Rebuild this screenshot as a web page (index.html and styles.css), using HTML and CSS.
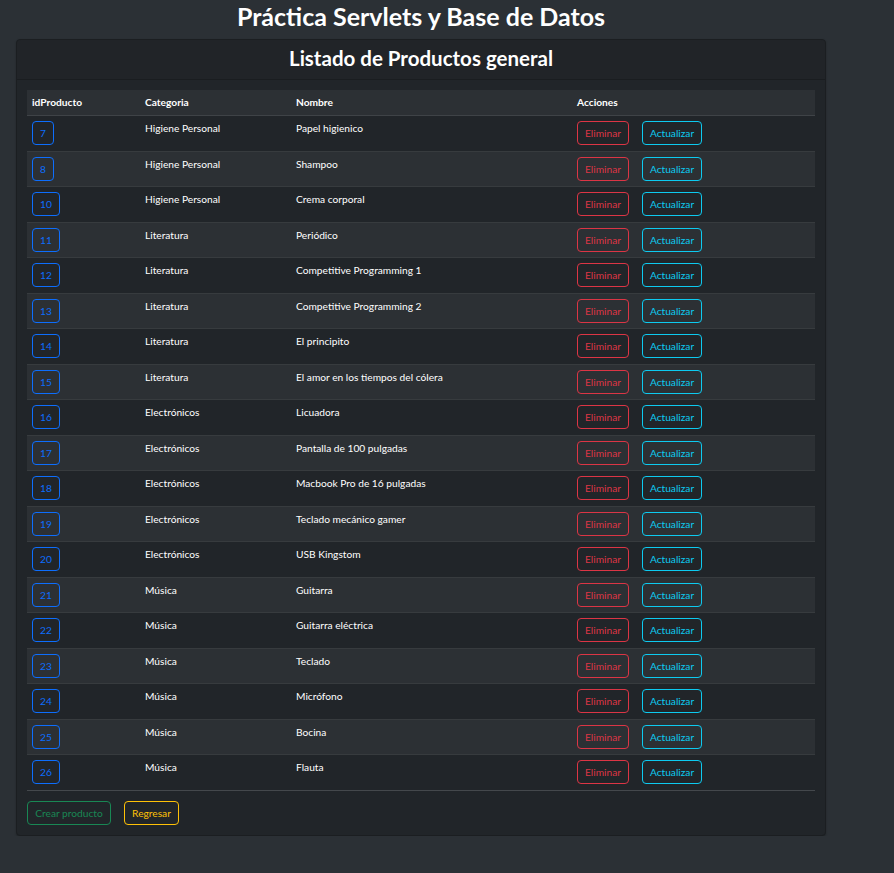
FILE: index.html
```html
<!DOCTYPE html>
<html lang="es">
<head>
<meta charset="utf-8">
<title>Práctica Servlets y Base de Datos</title>
<link rel="stylesheet" href="styles.css">
</head>
<body>
<div class="page">
  <h1 class="title">Práctica Servlets y Base de Datos</h1>
  <div class="card">
    <div class="card-header">Listado de Productos general</div>
    <div class="card-body">
      <table class="table">
        <thead>
          <tr><th class="c-id">idProducto</th><th class="c-cat">Categoria</th><th class="c-name">Nombre</th><th class="c-act">Acciones</th></tr>
        </thead>
        <tbody>
          <tr><td><a class="btn btn-id">7</a></td><td>Higiene Personal</td><td>Papel higienico</td><td><a class="btn btn-del">Eliminar</a><a class="btn btn-upd">Actualizar</a></td></tr>
          <tr><td><a class="btn btn-id">8</a></td><td>Higiene Personal</td><td>Shampoo</td><td><a class="btn btn-del">Eliminar</a><a class="btn btn-upd">Actualizar</a></td></tr>
          <tr><td><a class="btn btn-id">10</a></td><td>Higiene Personal</td><td>Crema corporal</td><td><a class="btn btn-del">Eliminar</a><a class="btn btn-upd">Actualizar</a></td></tr>
          <tr><td><a class="btn btn-id">11</a></td><td>Literatura</td><td>Periódico</td><td><a class="btn btn-del">Eliminar</a><a class="btn btn-upd">Actualizar</a></td></tr>
          <tr><td><a class="btn btn-id">12</a></td><td>Literatura</td><td>Competitive Programming 1</td><td><a class="btn btn-del">Eliminar</a><a class="btn btn-upd">Actualizar</a></td></tr>
          <tr><td><a class="btn btn-id">13</a></td><td>Literatura</td><td>Competitive Programming 2</td><td><a class="btn btn-del">Eliminar</a><a class="btn btn-upd">Actualizar</a></td></tr>
          <tr><td><a class="btn btn-id">14</a></td><td>Literatura</td><td>El principito</td><td><a class="btn btn-del">Eliminar</a><a class="btn btn-upd">Actualizar</a></td></tr>
          <tr><td><a class="btn btn-id">15</a></td><td>Literatura</td><td>El amor en los tiempos del cólera</td><td><a class="btn btn-del">Eliminar</a><a class="btn btn-upd">Actualizar</a></td></tr>
          <tr><td><a class="btn btn-id">16</a></td><td>Electrónicos</td><td>Licuadora</td><td><a class="btn btn-del">Eliminar</a><a class="btn btn-upd">Actualizar</a></td></tr>
          <tr><td><a class="btn btn-id">17</a></td><td>Electrónicos</td><td>Pantalla de 100 pulgadas</td><td><a class="btn btn-del">Eliminar</a><a class="btn btn-upd">Actualizar</a></td></tr>
          <tr><td><a class="btn btn-id">18</a></td><td>Electrónicos</td><td>Macbook Pro de 16 pulgadas</td><td><a class="btn btn-del">Eliminar</a><a class="btn btn-upd">Actualizar</a></td></tr>
          <tr><td><a class="btn btn-id">19</a></td><td>Electrónicos</td><td>Teclado mecánico gamer</td><td><a class="btn btn-del">Eliminar</a><a class="btn btn-upd">Actualizar</a></td></tr>
          <tr><td><a class="btn btn-id">20</a></td><td>Electrónicos</td><td>USB Kingstom</td><td><a class="btn btn-del">Eliminar</a><a class="btn btn-upd">Actualizar</a></td></tr>
          <tr><td><a class="btn btn-id">21</a></td><td>Música</td><td>Guitarra</td><td><a class="btn btn-del">Eliminar</a><a class="btn btn-upd">Actualizar</a></td></tr>
          <tr><td><a class="btn btn-id">22</a></td><td>Música</td><td>Guitarra eléctrica</td><td><a class="btn btn-del">Eliminar</a><a class="btn btn-upd">Actualizar</a></td></tr>
          <tr><td><a class="btn btn-id">23</a></td><td>Música</td><td>Teclado</td><td><a class="btn btn-del">Eliminar</a><a class="btn btn-upd">Actualizar</a></td></tr>
          <tr><td><a class="btn btn-id">24</a></td><td>Música</td><td>Micrófono</td><td><a class="btn btn-del">Eliminar</a><a class="btn btn-upd">Actualizar</a></td></tr>
          <tr><td><a class="btn btn-id">25</a></td><td>Música</td><td>Bocina</td><td><a class="btn btn-del">Eliminar</a><a class="btn btn-upd">Actualizar</a></td></tr>
          <tr><td><a class="btn btn-id">26</a></td><td>Música</td><td>Flauta</td><td><a class="btn btn-del">Eliminar</a><a class="btn btn-upd">Actualizar</a></td></tr>
        </tbody>
      </table>
      <div class="actions">
        <a class="btn btn-create">Crear producto</a>
        <a class="btn btn-back">Regresar</a>
      </div>
    </div>
  </div>
</div>
</body>
</html>
```

FILE: styles.css
```css
* { box-sizing: border-box; }
html, body {
  margin: 0;
  padding: 0;
  background: #2b3035;
  color: #dee2e6;
  font-family: Lato, "Noto Sans", sans-serif;
}
.page {
  width: 842px;
  padding: 0 16px;
}
.title {
  margin: 0 0 7px;
  height: 32px;
  line-height: 32px;
  text-align: center;
  font-size: 25px;
  font-weight: 700;
  color: #fff;
}
.card {
  background: #212529;
  border: 1px solid #1b1e21;
  border-radius: 4px;
  box-shadow: 0 1px 2px rgba(0,0,0,0.25);
}
.card-header {
  height: 40px;
  line-height: 36px;
  text-align: center;
  font-size: 20.5px;
  font-weight: 700;
  color: #fff;
  border-bottom: 1px solid #1a1d20;
  background: #212428;
  border-radius: 4px 4px 0 0;
}
.card-body {
  padding: 10px 10px 10px;
}
.table {
  width: 100%;
  border-collapse: collapse;
  table-layout: fixed;
  font-size: 10.2px;
  line-height: 15px;
  vertical-align: top;
}
.table th, .table td {
  padding: 5.25px 5px;
  text-align: left;
  vertical-align: top;
}
.table th {
  padding: 5px;
  line-height: 15px;
  font-weight: 700;
  color: #fff;
  background: #2c3034;
  border-bottom: 1px solid #3f4347;
}
.table td {
  color: #fff;
  border-bottom: 1px solid #373b3e;
}
.table tbody tr:nth-child(even) td { background: #2c3034; }
.table tbody tr:last-child td { border-bottom-color: #44484c; }
.c-id { width: 113px; }
.c-cat { width: 151px; }
.c-name { width: 281px; }
.btn {
  display: inline-block;
  height: 24px;
  line-height: 22px;
  padding: 0 7px;
  border: 1px solid;
  border-radius: 4px;
  font-size: 10.2px;
  text-align: center;
  vertical-align: top;
}
.btn-id { color: #0d6efd; border-color: #0d6efd; min-width: 22px; }
.btn-del { color: #dc3545; border-color: #dc3545; width: 52px; padding: 0; }
.btn-upd { color: #0dcaf0; border-color: #0dcaf0; width: 60px; padding: 0; margin-left: 13px; }
.actions {
  display: flex;
  gap: 13px;
  margin-top: 10px;
}
.btn-create { color: #198754; border-color: #198754; width: 84px; padding: 0; }
.btn-back { color: #ffc107; border-color: #ffc107; width: 55px; padding: 0; }
```
